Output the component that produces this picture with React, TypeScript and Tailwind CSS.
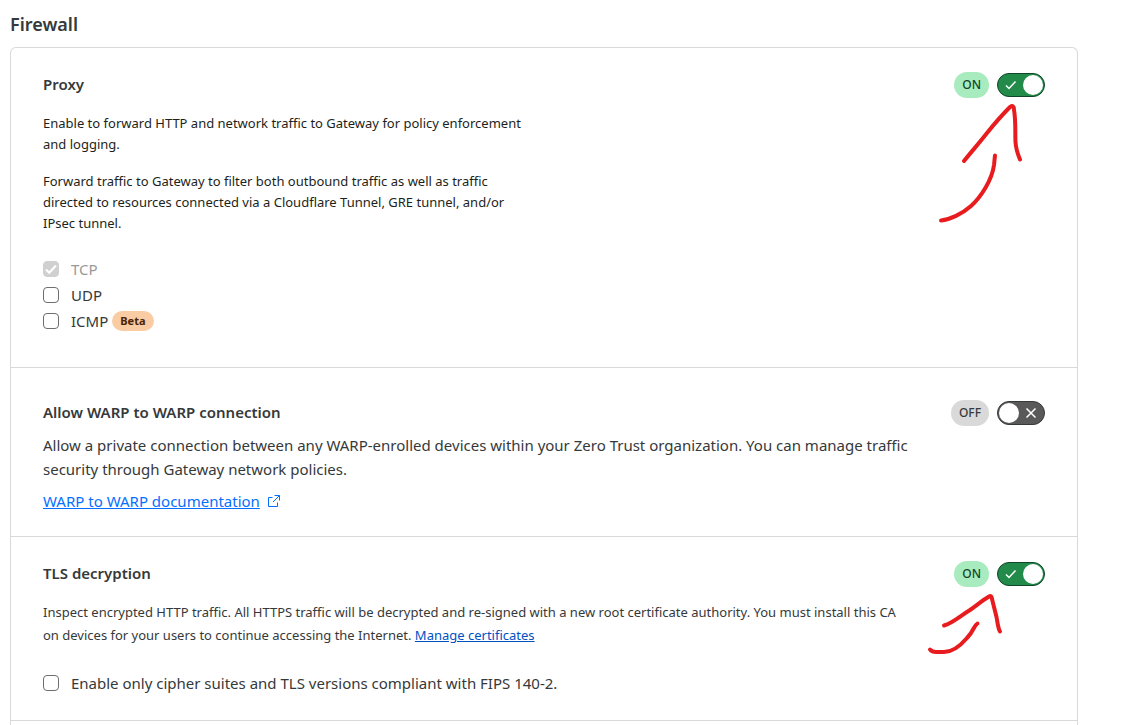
import { useState } from "react";
import type { ReactNode } from "react";

function StatusToggle({ label, initial }: { label: string; initial: boolean }) {
  const [on, setOn] = useState(initial);
  return (
    <div className="flex shrink-0 items-center gap-2">
      <span
        className={
          on
            ? "flex h-[26px] items-center rounded-full bg-[#a8ebbf] px-2 text-xs font-medium text-[#10452a]"
            : "flex h-[26px] items-center rounded-full bg-[#d9d9d9] px-2 text-xs font-medium text-[#36393a]"
        }
      >
        {on ? "ON" : "OFF"}
      </span>
      <button
        type="button"
        role="switch"
        aria-checked={on}
        aria-label={label}
        onClick={() => setOn(!on)}
        className={
          on
            ? "flex h-6 w-12 items-center justify-between rounded-full border border-[#10452a] bg-[#228b49] pr-px pl-[7px]"
            : "flex h-6 w-12 flex-row-reverse items-center justify-between rounded-full border border-[#36393a] bg-[#595959] pr-[7px] pl-px"
        }
      >
        <svg viewBox="0 0 12 12" className="size-3" fill="none" stroke="white" strokeWidth="1.5">
          {on ? <path d="M1 6.5 4 9.5 10.5 2.5" /> : <path d="M1.5 1.5 10.5 10.5M10.5 1.5 1.5 10.5" />}
        </svg>
        <span className="size-5 rounded-full bg-white" />
      </button>
    </div>
  );
}

function Check({
  label,
  checked = false,
  disabled = false,
  children,
}: {
  label: string;
  checked?: boolean;
  disabled?: boolean;
  children?: ReactNode;
}) {
  return (
    <div className="flex h-[26px] items-center">
      <label
        className={
          disabled
            ? "flex items-center gap-3 text-[15px] leading-[26px] text-[#999999]"
            : "flex items-center gap-3 text-[15px] leading-[26px] text-[#36393a]"
        }
      >
        <span className="grid size-4 shrink-0">
          <input
            type="checkbox"
            defaultChecked={checked}
            disabled={disabled}
            className="peer col-start-1 row-start-1 size-4 appearance-none rounded-[4px] border border-[#6e6e6e] bg-white checked:border-[#0051c3] checked:bg-[#0051c3] disabled:border-[#d0d0d0] disabled:bg-[#d0d0d0]"
          />
          <svg
            viewBox="0 0 16 16"
            className="pointer-events-none invisible col-start-1 row-start-1 size-4 peer-checked:visible"
            fill="none"
            stroke="white"
            strokeWidth="2"
          >
            <path d="M3 8.5 6.2 11.8 13 4.5" />
          </svg>
        </span>
        {label}
      </label>
      {children}
    </div>
  );
}

function Title({ children }: { children: ReactNode }) {
  return <h2 className="text-[15px] leading-6 font-semibold">{children}</h2>;
}

function Stroke({ d }: { d: string }) {
  return <path d={d} fill="none" stroke="#e81c1f" strokeWidth="4" strokeLinecap="round" strokeLinejoin="round" />;
}

export default function App() {
  return (
    <main className="bg-white pr-[69px] pl-[10px] font-['Noto_Sans','Open_Sans',sans-serif] text-[#36393a]">
      <h1 className="pt-[10px] pb-[9px] text-lg leading-7 font-semibold">Firewall</h1>
      <div className="rounded-t-md border border-b-0 border-[#d9d9d9]">
        <section className="relative border-b border-[#d9d9d9] px-8 pt-6 pb-[33px]">
          <div className="flex items-start justify-between">
            <Title>Proxy</Title>
            <StatusToggle label="Proxy" initial={true} />
          </div>
          <div className="mt-[15px] mb-[22px] flex max-w-[490px] flex-col gap-4 text-[13px] leading-[21px] text-[#1d1f20]">
            <p>Enable to forward HTTP and network traffic to Gateway for policy enforcement and logging.</p>
            <p>
              Forward traffic to Gateway to filter both outbound traffic as well as traffic directed to resources
              connected via a Cloudflare Tunnel, GRE tunnel, and/or IPsec tunnel.
            </p>
          </div>
          <Check label="TCP" checked disabled />
          <Check label="UDP" />
          <Check label="ICMP">
            <span className="ml-1 flex h-5 items-center rounded-full bg-[#f9cca3] px-2 text-[11px] font-bold text-[#4a2504]">
              Beta
            </span>
          </Check>
          <svg
            viewBox="930 98 100 130"
            className="pointer-events-none absolute top-[50px] right-[47px] h-[130px] w-[100px]"
            aria-hidden="true"
          >
            <Stroke d="M964 161C972 151 980 142 987 133C995 123 1003 114 1010 107Q1014 104 1014 110C1016 121 1015 133 1015.500 142Q1016 150 1020 159.500" />
            <Stroke d="M995 155.500L994 165C992 180 981 197 971 206C962 214 950 219.500 941 220.500" />
          </svg>
        </section>

        <section className="border-b border-[#d9d9d9] px-8 pt-8 pb-[23px]">
          <div className="flex items-start justify-between">
            <Title>Allow WARP to WARP connection</Title>
            <StatusToggle label="Allow WARP to WARP connection" initial={false} />
          </div>
          <p className="mt-[7px] max-w-[880px] text-[15px] leading-6">
            Allow a private connection between any WARP-enrolled devices within your Zero Trust organization. You can
            manage traffic security through Gateway network policies.
          </p>
          <a href="#warp-docs" className="mt-2 flex w-fit items-center gap-2 text-[15px] leading-6 text-[#056fff]">
            <span className="underline">WARP to WARP documentation</span>
            <svg viewBox="0 0 12 12" className="size-3" fill="none" stroke="currentColor">
              <path d="M4.500 2.500H.5V11.500H9.500V7.500M6.500 .5H11.500V5.500M11.500 .5L5 7" />
            </svg>
          </a>
        </section>

        <section className="relative border-b border-[#d9d9d9] px-8 pt-6 pb-6">
          <div className="flex items-start justify-between">
            <Title>TLS decryption</Title>
            <StatusToggle label="TLS decryption" initial={true} />
          </div>
          <p className="mt-[14px] mb-[23px] max-w-[870px] text-[13px] leading-[23px]">
            Inspect encrypted HTTP traffic. All HTTPS traffic will be decrypted and re-signed with a new root
            certificate authority. You must install this CA on devices for your users to continue accessing the
            Internet.{" "}
            <a href="#certificates" className="text-[#0051c3] underline">
              Manage certificates
            </a>
          </p>
          <Check label="Enable only cipher suites and TLS versions compliant with FIPS 140-2." />
          <svg
            viewBox="920 587 90 75"
            className="pointer-events-none absolute top-[50px] right-[67px] h-[75px] w-[90px]"
            aria-hidden="true"
          >
            <Stroke d="M944 625.500C953 623 960 616 970 610C977 605 983 600 989 596.500Q991.500 595 992 599L996.500 617C998 625 998 628 1000 631.500" />
            <Stroke d="M977.500 623.500C974 625 974 631 967 638C961 645 952 652 944 652H936Q932 652 930 649.500" />
          </svg>
        </section>
        <div className="h-1" />
      </div>
    </main>
  );
}
